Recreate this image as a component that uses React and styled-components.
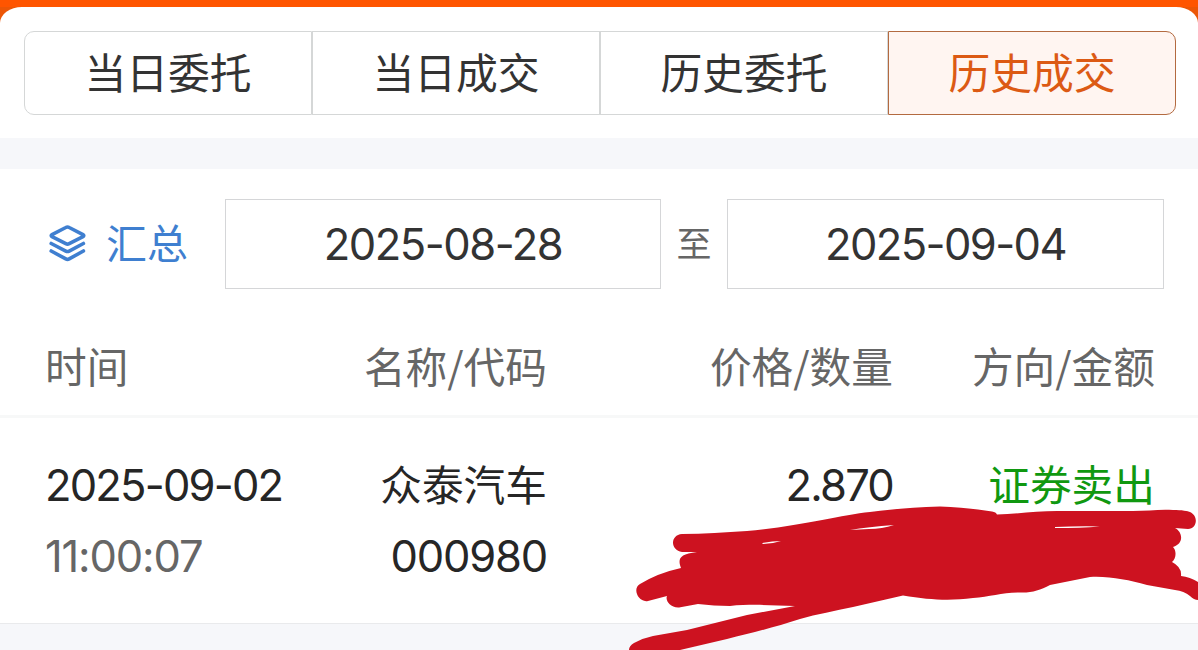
import React from "react";
import styled, { createGlobalStyle } from "styled-components";

const GlobalStyle = createGlobalStyle`
  * { box-sizing: border-box; }
  body {
    margin: 0;
    background: #ff5500;
    font-family: "Noto Sans CJK SC", sans-serif;
    overflow: hidden;
  }
`;

const Screen = styled.div`
  position: relative;
  width: 1198px;
  height: 650px;
  padding-top: 7px;
  overflow: hidden;
  background: linear-gradient(#ff5500 7px, #ec5606 7px);
`;

const Sheet = styled.main`
  height: 643px;
  display: flex;
  flex-direction: column;
  background: #fff;
  border-radius: 22px 22px 0 0 / 16px 16px 0 0;
`;

const Tabs = styled.nav`
  display: flex;
  height: 84px;
  margin: 24px 22px 23px 24px;
`;

const Tab = styled.button`
  flex: 1;
  padding: 0 0 4px;
  font: 400 41.8px/78px "Noto Sans CJK SC", sans-serif;
  color: ${(p) => (p.$active ? "#dc5a14" : "#333")};
  background: ${(p) => (p.$active ? "#fff5f1" : "#fff")};
  border: 1px solid ${(p) => (p.$active ? "#b36a40" : "#d5d7d7")};
  &:first-child { border-radius: 10px 0 0 10px; }
  &:last-child { border-radius: 0 10px 10px 0; }
`;

const Band = styled.div`
  flex: none;
  height: 31px;
  background: #f6f7fa;
`;

const Filters = styled.section`
  display: flex;
  align-items: center;
  height: 90px;
  margin: 30px 34px 0 49px;
`;

const Summary = styled.div`
  display: flex;
  align-items: center;
  width: 176px;
  padding-bottom: 2px;
  gap: 20px;
  color: #3f7fd0;
  font-size: 41px;
  line-height: 60px;
  svg { flex: none; }
  span { padding-bottom: 4px; }
`;

const DateBox = styled.div`
  display: flex;
  justify-content: center;
  align-items: center;
  width: ${(p) => p.$width}px;
  height: 90px;
  padding-bottom: 4px;
  border: 1px solid #d5d6d8;
  color: #333;
`;

const To = styled.span`
  width: 66px;
  padding-bottom: 4px;
  text-align: center;
  color: #666;
  font-size: 35px;
  line-height: 50px;
`;

const Num = styled.span`
  padding-top: 4px;
  font-family: Inter, sans-serif;
  font-size: 43.5px;
  font-weight: 400;
  line-height: 56px;
  letter-spacing: ${(p) => p.$spacing || -1.8}px;
  color: ${(p) => (p.$muted ? "#666" : "inherit")};
`;

const Row = styled.div`
  display: grid;
  grid-template-columns: 251px 250px 346px 262px;
  padding: 0 44px 0 46px;
  font-size: 41.7px;
  line-height: 60px;
`;

const HeadRow = styled(Row)`
  height: 129px;
  padding-top: 46px;
  color: #666;
  border-bottom: 3px solid #f7f8f8;
`;

const BodyRow = styled(Row)`
  height: 205px;
  padding-top: 35px;
  color: #262626;
`;

const Cell = styled.div`
  display: flex;
  flex-direction: column;
  gap: 11px;
  align-items: ${(p) => (p.$start ? "flex-start" : "flex-end")};
  margin-left: ${(p) => (p.$start ? "-1px" : "0")};
  white-space: nowrap;
`;

const Side = styled.span`
  color: #109810;
`;

const Footer = styled.footer`
  flex: 1;
  background: #f6f7fa;
  border-top: 1px solid #e9eaec;
`;

const Scribble = styled.svg`
  position: absolute;
  inset: 0;
  pointer-events: none;
`;

const tabs = ["当日委托", "当日成交", "历史委托", "历史成交"];

function LayersIcon() {
  return (
    <svg width="37" height="37" viewBox="0 0 37 37" fill="none" stroke="currentColor" strokeWidth="3.6" strokeLinecap="round" strokeLinejoin="round">
      <path d="M16.8 2.5Q18.5 1.5 20.2 2.5L34 9.6Q35.6 10.6 34 11.6L20.2 18.7Q18.5 19.6 16.8 18.7L3 11.6Q1.4 10.6 3 9.6Z" />
      <path d="M2.2 18.5L16.8 26.1Q18.5 27 20.2 26.1L34.4 18.5" />
      <path d="M2.2 26L16.8 33.9Q18.5 34.8 20.2 33.9L34.4 26" />
    </svg>
  );
}

export default function App() {
  return (
    <Screen>
      <GlobalStyle />
      <Sheet>
        <Tabs>
          {tabs.map((label, i) => (
            <Tab key={label} $active={i === 3}>{label}</Tab>
          ))}
        </Tabs>
        <Band />
        <Filters>
          <Summary><LayersIcon /><span>汇总</span></Summary>
          <DateBox $width={436}><Num $spacing={-1.5}>2025-08-28</Num></DateBox>
          <To>至</To>
          <DateBox $width={437}><Num $spacing={-1.6}>2025-09-04</Num></DateBox>
        </Filters>
        <HeadRow>
          <Cell $start>时间</Cell>
          <Cell>名称/代码</Cell>
          <Cell>价格/数量</Cell>
          <Cell>方向/金额</Cell>
        </HeadRow>
        <BodyRow>
          <Cell $start>
            <Num>2025-09-02</Num>
            <Num $muted $spacing={-1.15}>11:00:07</Num>
          </Cell>
          <Cell>
            <span>众泰汽车</span>
            <Num $spacing={-1.2}>000980</Num>
          </Cell>
          <Cell><Num>2.870</Num></Cell>
          <Cell><Side>证券卖出</Side></Cell>
        </BodyRow>
        <Footer />
      </Sheet>
      <Scribble width="1198" height="650" viewBox="0 0 1198 650">
        <path
          fill="#cd1220"
          d="M682 534C704 534 725 532 747 531C797 527 840 515 870 512C895 509 915 507 940 506.5C958 507 975 509 992 511.5Q996 512 997 514.5C1017 514 1037 511 1057 511H1133C1148 511 1160 509 1173 510C1182 510 1188 511 1190 512C1199 516 1197 529 1188 529L1175 528C1183 532 1184 544 1173 547C1177 551 1176 559 1172 562Q1182 567 1181 576Q1190 577 1198 582V600Q1194 600 1190 596Q1184 591 1175 590L1147 585C1128 580 1110 576 1090 577Q1070 581 1050 585C1040 590 1032 593 1020 592.5C1003 592 990 597 973 598C950 601 930 600 903 595.5L853 607C835 611 817 614 800 619C775 627 752 633 727 639L680 650H629Q629 646 634 643Q643 638 653 636L687 630L747 615L795 606C770 605 750 604 730 606Q714 606 698 604L679 607.5C670 608 665 600 667 596L648 601C638 603 632 588 640 584Q658 573 681 568C678 560 678 554 697 552H682C670 550 670 535 682 534Z"
        />
        <path fill="#fff" d="M762 543Q773 541 781 541Q772 544 763 544ZM850 530Q868 527 894 525Q882 529 869 529ZM1055 527Q1080 526 1100 526.5Q1080 528 1055 528Z" />
      </Scribble>
    </Screen>
  );
}
